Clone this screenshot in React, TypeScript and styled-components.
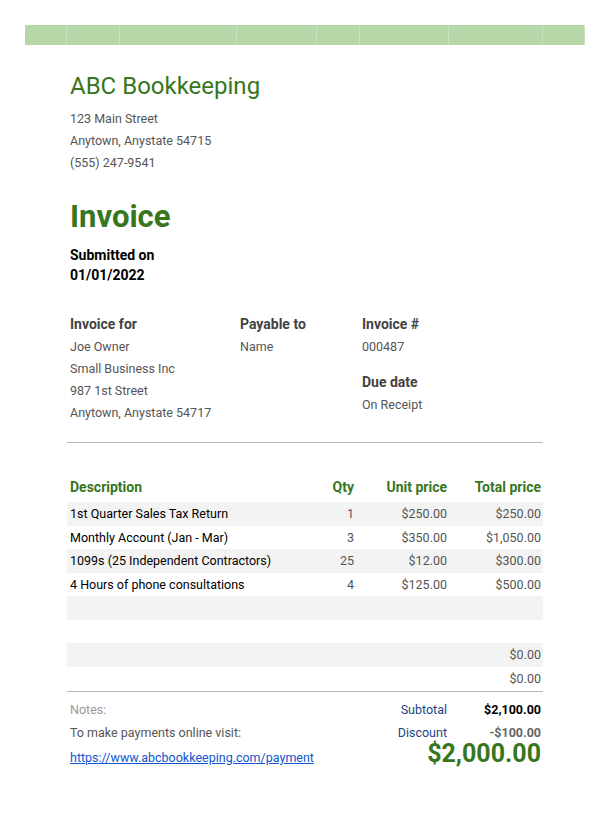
import React from 'react';
import styled, { createGlobalStyle } from 'styled-components';

const green = '#38761d';
const grey = '#555';

const Global = createGlobalStyle`
  body { margin: 0; background: #fff; font-family: Roboto, "Liberation Sans", sans-serif; }
`;

const Page = styled.div`
  width: 616px;
  padding-top: 25px;
`;

const TopBar = styled.div`
  margin: 0 31px 0 25px;
  height: 20px;
  background: #b6d7a8;
  display: grid;
  grid-template-columns: 42px 53px 117px 80px 43px 89px 94px 42px;
  & > div { border-right: 1px solid #c9e1be; }
`;

const Content = styled.div`
  padding: 0 73px 0 67px;
`;

const Company = styled.h1`
  color: ${green};
  font-size: 24px;
  font-weight: 400;
  margin: 27px 0 8px 3px;
  line-height: 28px;
`;

const Line = styled.div<{ muted?: boolean }>`
  font-size: 12.5px;
  color: ${p => (p.muted ? '#999' : grey)};
  line-height: 22px;
  margin-left: 3px;
`;

const Title = styled.h2`
  color: ${green};
  font-size: 31px;
  font-weight: 700;
  margin: 25px 0 10px 3px;
  line-height: 36px;
`;

const Submitted = styled.div`
  font-size: 14px;
  font-weight: 700;
  color: #000;
  line-height: 20px;
  margin-left: 3px;
`;

const InfoGrid = styled.div`
  display: grid;
  grid-template-columns: 170px 122px 1fr;
  margin-top: 28px;
  padding-bottom: 18px;
  border-bottom: 1px solid #b7b7b7;
`;

const Col = styled.div`
  margin-left: 3px;
`;

const Head = styled.div<{ top?: number }>`
  font-size: 14px;
  font-weight: 700;
  color: #434343;
  line-height: 22px;
  margin-top: ${p => p.top ?? 0}px;
  margin-bottom: 1px;
`;

const Table = styled.div`
  margin-top: 29px;
`;

const Row = styled.div<{ shaded?: boolean; head?: boolean }>`
  display: grid;
  grid-template-columns: 250px 39px 93px 94px;
  height: ${p => (p.head ? 30 : 23.5)}px;
  align-items: center;
  background: ${p => (p.shaded ? '#f3f3f3' : 'transparent')};
`;

const Cell = styled.div<{ right?: boolean; head?: boolean; dark?: boolean }>`
  font-size: ${p => (p.head ? 14 : 12.5)}px;
  font-weight: ${p => (p.head ? 700 : 400)};
  color: ${p => (p.head ? green : p.dark ? '#000' : grey)};
  text-align: ${p => (p.right ? 'right' : 'left')};
  padding: 0 2px 0 3px;
`;

const Footer = styled.div`
  border-top: 1px solid #b7b7b7;
  margin-top: 1px;
  padding-top: 6px;
  display: grid;
  grid-template-columns: 1fr 96px 94px;
  grid-auto-rows: 23px;
  align-items: center;
`;

const Label = styled.div`
  font-size: 12.5px;
  color: #1c4587;
  text-align: right;
  padding-right: 2px;
`;

const Amount = styled.div<{ bold?: boolean }>`
  font-size: 12.5px;
  text-align: right;
  padding-right: 2px;
  font-weight: 700;
  color: ${p => (p.bold ? '#000' : '#666')};
`;

const Link = styled.a`
  font-size: 12.5px;
  color: #1155cc;
  margin-left: 3px;
  align-self: end;
  padding-bottom: 2px;
`;

const Total = styled.div`
  grid-column: 2 / 4;
  text-align: right;
  font-size: 25px;
  font-weight: 700;
  color: ${green};
  padding-right: 2px;
  line-height: 36px;
  height: 40px;
`;

const items = [
  ['1st Quarter Sales Tax Return', '1', '$250.00', '$250.00'],
  ['Monthly Account (Jan - Mar)', '3', '$350.00', '$1,050.00'],
  ['1099s (25 Independent Contractors)', '25', '$12.00', '$300.00'],
  ['4 Hours of phone consultations', '4', '$125.00', '$500.00'],
];

export default function App() {
  return (
    <Page>
      <Global />
      <TopBar>
        {Array.from({ length: 8 }).map((_, i) => <div key={i} />)}
      </TopBar>
      <Content>
        <Company>ABC Bookkeeping</Company>
        <Line>123 Main Street</Line>
        <Line>Anytown, Anystate 54715</Line>
        <Line>(555) 247-9541</Line>
        <Title>Invoice</Title>
        <Submitted>Submitted on</Submitted>
        <Submitted>01/01/2022</Submitted>
        <InfoGrid>
          <Col>
            <Head>Invoice for</Head>
            <Line style={{ marginLeft: 0 }}>Joe Owner</Line>
            <Line style={{ marginLeft: 0 }}>Small Business Inc</Line>
            <Line style={{ marginLeft: 0 }}>987 1st Street</Line>
            <Line style={{ marginLeft: 0 }}>Anytown, Anystate 54717</Line>
          </Col>
          <Col>
            <Head>Payable to</Head>
            <Line style={{ marginLeft: 0 }}>Name</Line>
          </Col>
          <Col>
            <Head>Invoice #</Head>
            <Line style={{ marginLeft: 0 }}>000487</Line>
            <Head top={13}>Due date</Head>
            <Line style={{ marginLeft: 0 }}>On Receipt</Line>
          </Col>
        </InfoGrid>
        <Table>
          <Row head>
            <Cell head>Description</Cell>
            <Cell head right>Qty</Cell>
            <Cell head right>Unit price</Cell>
            <Cell head right>Total price</Cell>
          </Row>
          {items.map((it, i) => (
            <Row key={i} shaded={i % 2 === 0}>
              <Cell dark>{it[0]}</Cell>
              <Cell right>{it[1]}</Cell>
              <Cell right>{it[2]}</Cell>
              <Cell right>{it[3]}</Cell>
            </Row>
          ))}
          <Row shaded />
          <Row />
          <Row shaded>
            <Cell /><Cell /><Cell /><Cell right>$0.00</Cell>
          </Row>
          <Row>
            <Cell /><Cell /><Cell /><Cell right>$0.00</Cell>
          </Row>
        </Table>
        <Footer>
          <Line muted>Notes:</Line>
          <Label>Subtotal</Label>
          <Amount bold>$2,100.00</Amount>
          <Line>To make payments online visit:</Line>
          <Label>Discount</Label>
          <Amount>-$100.00</Amount>
          <Link href="#">https://www.abcbookkeeping.com/payment</Link>
          <Total>$2,000.00</Total>
        </Footer>
      </Content>
    </Page>
  );
}
